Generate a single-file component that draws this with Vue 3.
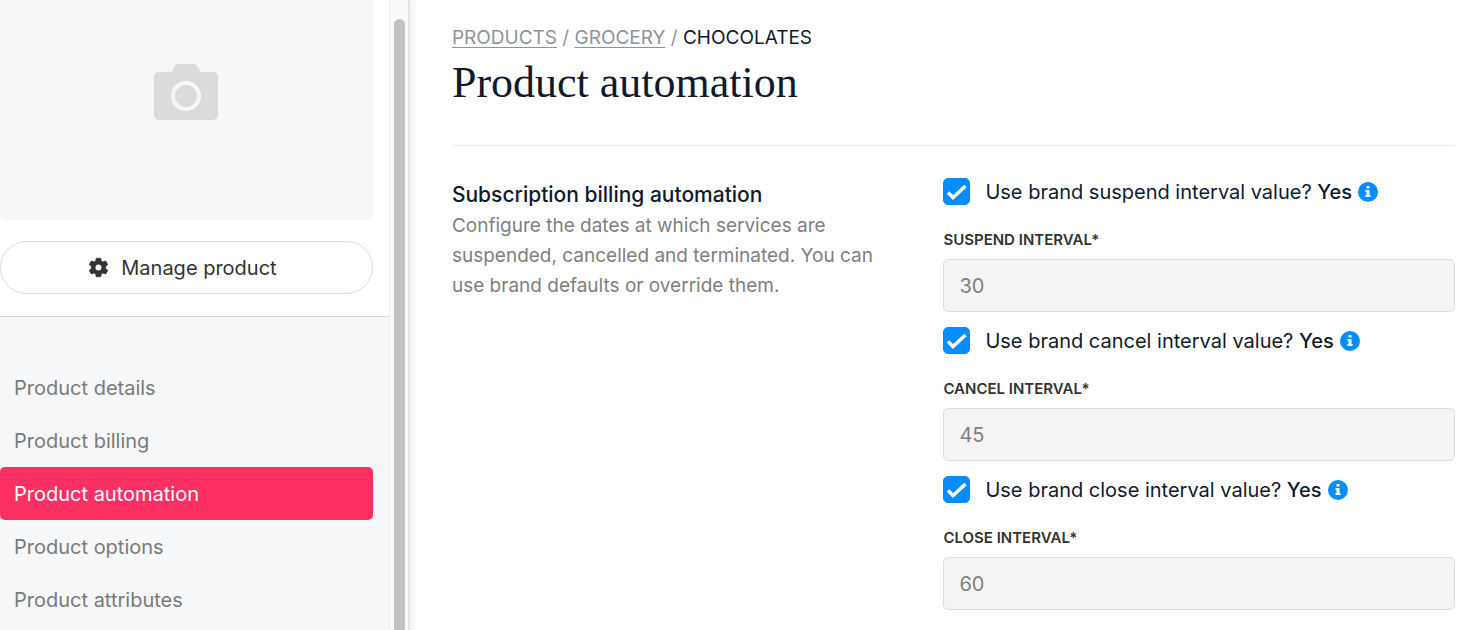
<template>
  <div class="layout">
    <aside class="sidebar">
      <div class="sidebar-content">
        <div class="product-head">
          <div class="product-image">
            <svg class="camera" viewBox="0 0 64 56" aria-hidden="true">
              <path
                fill="#dbdbdb"
                d="M5 8h13l1-3c1-3 3-5 6-5h14c3 0 5 2 6 5l1 3h13a5 5 0 0 1 5 5v38a5 5 0 0 1-5 5H5a5 5 0 0 1-5-5V13a5 5 0 0 1 5-5z"
              />
              <circle cx="32" cy="32" r="13" fill="none" stroke="#f6f7f9" stroke-width="4" />
            </svg>
          </div>
          <button type="button" class="btn-manage">
            <svg class="gear" viewBox="0 0 24 24" aria-hidden="true">
              <path
                fill="#333"
                fill-rule="evenodd"
                d="M9.500 1.500h5l.6 3.200 2 1.100 3.100-1.100 2.300 4-2.500 2.200v2.200l2.500 2.200-2.300 4-3.100-1.100-2 1.100-.6 3.200h-5l-.6-3.200-2-1.100-3.100 1.100-2.300-4L4 13.100v-2.200L1.500 8.700l2.300-4 3.100 1.100 2-1.100zM12 8a4 4 0 1 0 0 8 4 4 0 0 0 0-8z"
                stroke="#333"
                stroke-width="1"
                stroke-linejoin="round"
              />
            </svg>
            Manage product
          </button>
        </div>
        <nav class="menu">
          <a
            v-for="item in menuItems"
            :key="item"
            href="#"
            class="menu-item"
            :class="{ active: item === activeItem }"
            @click.prevent="activeItem = item"
          >{{ item }}</a>
        </nav>
      </div>
      <div class="scroll-track">
        <div class="scroll-thumb"></div>
      </div>
    </aside>

    <main class="main">
      <header class="page-header">
        <nav class="breadcrumb">
          <a href="#">PRODUCTS</a> / <a href="#">GROCERY</a> /
          <span class="current">CHOCOLATES</span>
        </nav>
        <h1>Product automation</h1>
      </header>

      <section class="settings">
        <div class="settings-info">
          <h2>Subscription billing automation</h2>
          <p>
            Configure the dates at which services are suspended, cancelled and
            terminated. You can use brand defaults or override them.
          </p>
        </div>

        <form class="settings-form" @submit.prevent>
          <div v-for="field in fields" :key="field.name" class="form-group">
            <div class="check-row">
              <input :id="'use-' + field.name" v-model="field.useBrand" type="checkbox" />
              <label :for="'use-' + field.name">
                Use brand {{ field.name }} interval value?
                <strong>{{ field.useBrand ? 'Yes' : 'No' }}</strong>
              </label>
              <svg class="info" viewBox="0 0 20 20" aria-hidden="true">
                <circle cx="10" cy="10" r="10" fill="#058cff" />
                <path fill="#fff" d="M8.500 4h3v2.600h-3zM7.500 8h4v5h1v2h-5v-2h1v-3h-1z" />
              </svg>
            </div>
            <label class="field-label" :for="field.name">{{ field.label }}</label>
            <input
              :id="field.name"
              v-model="field.value"
              type="text"
              class="field-input"
              :disabled="field.useBrand"
            />
          </div>
        </form>
      </section>
    </main>
  </div>
</template>

<script setup>
import { ref } from 'vue'

const menuItems = [
  'Product details',
  'Product billing',
  'Product automation',
  'Product options',
  'Product attributes'
]

const activeItem = ref('Product automation')

const fields = ref([
  { name: 'suspend', label: 'SUSPEND INTERVAL*', value: '30', useBrand: true },
  { name: 'cancel', label: 'CANCEL INTERVAL*', value: '45', useBrand: true },
  { name: 'close', label: 'CLOSE INTERVAL*', value: '60', useBrand: true }
])
</script>

<style>
body {
  background: #fff;
}
</style>

<style scoped>
.layout {
  display: flex;
  min-height: 100vh;
  font-family: Inter, sans-serif;
  font-size: 20px;
  color: #0f1b2d;
}

.layout * {
  box-sizing: border-box;
}

.sidebar {
  display: flex;
  flex: 0 0 28%;
  border-right: 2px solid #e2e2e2;
  box-shadow: 2px 0 8px rgba(0, 0, 0, 0.08);
}

.sidebar-content {
  flex: 1;
  background: #f6f7f9;
}

.product-head {
  padding: 0 16px 22px 0;
  background: #fff;
  border-bottom: 1px solid #d8dadc;
}

.product-image {
  display: flex;
  justify-content: center;
  padding: 64px 0 100px;
  background: #f6f7f9;
  border-radius: 0 0 5px 5px;
}

.camera {
  width: 64px;
  height: 56px;
}

.btn-manage {
  display: flex;
  align-items: center;
  justify-content: center;
  gap: 12px;
  width: 100%;
  height: 53px;
  margin-top: 21px;
  padding: 0 12px 0 4px;
  border: 1px solid #dbdbdb;
  border-radius: 27px;
  background: #fff;
  color: #333;
  font: inherit;
  cursor: pointer;
}

.gear {
  width: 21px;
  height: 21px;
}

.menu {
  padding: 44px 16px 0 0;
}

.menu-item {
  display: block;
  padding: 2px 14px 0;
  line-height: 51px;
  border-radius: 5px;
  color: #7a7a7a;
  text-decoration: none;
}

.menu-item.active {
  background: #fc3062;
  color: #fff;
}

.scroll-track {
  display: flex;
  width: 19px;
  padding: 19px 3px 0 4px;
  border-left: 1px solid #ececec;
  background: #fafafa;
}

.scroll-thumb {
  flex: 1;
  background: #c1c1c1;
  border-radius: 6px 6px 0 0;
}

.main {
  flex: 1;
  padding: 24px 9px 20px 42px;
}

.page-header {
  padding-bottom: 36px;
  border-bottom: 1px solid #ebebeb;
}

.breadcrumb {
  font-size: 19px;
  line-height: 28px;
  color: #8f949c;
}

.breadcrumb a {
  color: inherit;
  text-underline-offset: 3px;
}

.breadcrumb .current {
  color: #0f1b2d;
}

h1 {
  margin: 5px 0 0;
  font-family: "Liberation Serif", serif;
  font-size: 44px;
  font-weight: 400;
  line-height: 52px;
}

.settings {
  display: flex;
  padding-top: 32px;
}

.settings-info {
  flex: 0 0 49%;
  padding: 2px 48px 0 0;
}

h2 {
  margin: 0;
  font-size: 21px;
  font-weight: 500;
  line-height: 30px;
}

p {
  margin: 1px 0 0;
  font-size: 19px;
  line-height: 30px;
  color: #7f7f7f;
}

.settings-form {
  flex: 1;
}

.form-group {
  margin-bottom: 15px;
}

.check-row {
  display: flex;
  align-items: center;
  height: 27px;
}

.check-row input {
  appearance: none;
  flex: none;
  width: 27px;
  height: 27px;
  margin: 0 15px 0 0;
  border: 1px solid #058cff;
  border-radius: 5px;
  background: #fff;
}

.check-row input:checked {
  background: #058cff url("data:image/svg+xml,%3Csvg xmlns='http://www.w3.org/2000/svg' viewBox='0 0 25 25'%3E%3Cpath d='M4 13.500l5 5L21.500 7' fill='none' stroke='%23fff' stroke-width='3.500'/%3E%3C/svg%3E") center / 25px no-repeat;
}

.check-row strong {
  font-weight: 500;
}

.info {
  width: 20px;
  height: 20px;
  margin-left: 6px;
}

.field-label {
  display: block;
  padding: 25px 0 9px;
  font-size: 15px;
  font-weight: 600;
  line-height: 20px;
  color: #333;
}

.field-input {
  display: block;
  width: 100%;
  height: 53px;
  padding: 0 15px;
  border: 1px solid #dcdcdc;
  border-radius: 5px;
  background: #f4f4f4;
  color: #7f7f7f;
  font: inherit;
}
</style>
